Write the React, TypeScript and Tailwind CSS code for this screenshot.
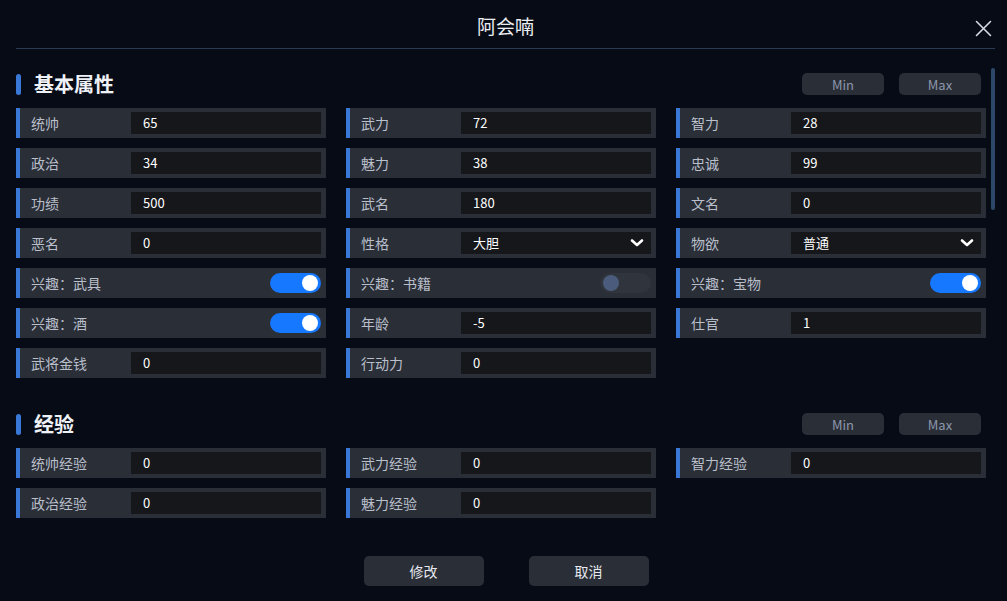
import React from "react";

type Field =
  | { kind: "input"; label: string; value: string }
  | { kind: "select"; label: string; value: string }
  | { kind: "toggle"; label: string; on: boolean; disabled?: boolean }
  | { kind: "empty" };

const basic: Field[] = [
  { kind: "input", label: "统帅", value: "65" },
  { kind: "input", label: "武力", value: "72" },
  { kind: "input", label: "智力", value: "28" },
  { kind: "input", label: "政治", value: "34" },
  { kind: "input", label: "魅力", value: "38" },
  { kind: "input", label: "忠诚", value: "99" },
  { kind: "input", label: "功绩", value: "500" },
  { kind: "input", label: "武名", value: "180" },
  { kind: "input", label: "文名", value: "0" },
  { kind: "input", label: "恶名", value: "0" },
  { kind: "select", label: "性格", value: "大胆" },
  { kind: "select", label: "物欲", value: "普通" },
  { kind: "toggle", label: "兴趣：武具", on: true },
  { kind: "toggle", label: "兴趣：书籍", on: false, disabled: true },
  { kind: "toggle", label: "兴趣：宝物", on: true },
  { kind: "toggle", label: "兴趣：酒", on: true },
  { kind: "input", label: "年龄", value: "-5" },
  { kind: "input", label: "仕官", value: "1" },
  { kind: "input", label: "武将金钱", value: "0" },
  { kind: "input", label: "行动力", value: "0" },
];

const exp: Field[] = [
  { kind: "input", label: "统帅经验", value: "0" },
  { kind: "input", label: "武力经验", value: "0" },
  { kind: "input", label: "智力经验", value: "0" },
  { kind: "input", label: "政治经验", value: "0" },
  { kind: "input", label: "魅力经验", value: "0" },
];

function Chevron() {
  return (
    <svg width="14" height="10" viewBox="0 0 14 10" className="block">
      <path d="M2 2.5 L7 7 L12 2.5" fill="none" stroke="#ffffff" strokeWidth="2.6" strokeLinecap="round" strokeLinejoin="round" />
    </svg>
  );
}

function Row({ f }: { f: Field }) {
  if (f.kind === "empty") return <div />;
  return (
    <div className="h-[30px] flex items-center bg-[#2a2e36] border-l-[4px] border-[#3a78d8] pr-[5px]">
      <div className="w-[111px] pl-[11px] text-[14px] text-[#b9bfcb] leading-none shrink-0">{f.label}</div>
      {f.kind === "input" && (
        <div className="flex-1 h-[22px] bg-[#16171b] flex items-center pl-[12px] pb-[2px] text-[13px] text-white leading-none">
          {f.value}
        </div>
      )}
      {f.kind === "select" && (
        <div className="flex-1 h-[22px] bg-[#16171b] flex items-center justify-between pl-[12px] pr-[7px] text-[13px] text-white leading-none">
          <span className="pb-[2px]">{f.value}</span>
          <Chevron />
        </div>
      )}
      {f.kind === "toggle" && (
        <div className="flex-1 flex justify-end">
          {f.disabled ? (
            <div className="w-[51px] h-[20px] rounded-full bg-[#30343c] flex items-center pl-[3px]">
              <div className="w-[16px] h-[16px] rounded-full bg-[#4a5b7c]" />
            </div>
          ) : (
            <div className="w-[51px] h-[20px] rounded-full bg-[#1677ff] flex items-center justify-end pr-[3px]">
              <div className="w-[16px] h-[16px] rounded-full bg-white" />
            </div>
          )}
        </div>
      )}
    </div>
  );
}

function SectionHeader({ title }: { title: string }) {
  return (
    <div className="h-[24px] flex items-center justify-between pr-[5px]">
      <div className="flex items-center">
        <div className="w-[5px] h-[21px] rounded-full bg-[#3a78d8]" />
        <div className="ml-[13px] text-[20px] font-bold text-[#eef1f6] leading-none">{title}</div>
      </div>
      <div className="flex items-center gap-[15px]">
        <div className="w-[82px] h-[22px] rounded-[5px] bg-[#2a2e36] flex items-center justify-center text-[13px] text-[#8d97ad] leading-none">Min</div>
        <div className="w-[82px] h-[22px] rounded-[5px] bg-[#2a2e36] flex items-center justify-center text-[13px] text-[#8d97ad] leading-none">Max</div>
      </div>
    </div>
  );
}

export default function App() {
  return (
    <div
      className="w-[1007px] h-[601px] bg-[#060b16] overflow-hidden relative"
      style={{ fontFamily: '"Microsoft YaHei", "Noto Sans CJK SC", "Noto Sans", sans-serif' }}
    >
      <div className="mx-[16px] mr-[12px] h-[49px] border-b border-[#2b3a50] flex items-center justify-center relative">
        <div className="text-[19px] text-[#eceef2] leading-none mt-[3px]">阿会喃</div>
        <div className="absolute right-[3px] top-[20px]">
          <svg width="17" height="17" viewBox="0 0 17 17">
            <path d="M1.5 1.5 L15.5 15.5 M15.5 1.5 L1.5 15.5" stroke="#d6dae2" strokeWidth="1.6" strokeLinecap="round" />
          </svg>
        </div>
      </div>

      <div className="pl-[16px] pr-[21px] pt-[23px]">
        <SectionHeader title="基本属性" />
        <div className="mt-[12px] grid grid-cols-3 gap-x-[20px] gap-y-[10px]">
          {basic.map((f, i) => (
            <Row key={i} f={f} />
          ))}
        </div>

        <div className="mt-[34px]">
          <SectionHeader title="经验" />
        </div>
        <div className="mt-[12px] grid grid-cols-3 gap-x-[20px] gap-y-[10px]">
          {exp.map((f, i) => (
            <Row key={i} f={f} />
          ))}
        </div>

        <div className="mt-[38px] flex justify-center gap-[45px] pl-[10px]">
          <div className="w-[120px] h-[30px] rounded-[5px] bg-[#2a2e36] flex items-center justify-center text-[14px] text-[#e6e9ef] leading-none">修改</div>
          <div className="w-[120px] h-[30px] rounded-[5px] bg-[#2a2e36] flex items-center justify-center text-[14px] text-[#e6e9ef] leading-none">取消</div>
        </div>
      </div>

      <div className="absolute left-[991px] top-[68px] w-[4px] h-[142px] rounded-full bg-[#2c4868]" />
    </div>
  );
}
